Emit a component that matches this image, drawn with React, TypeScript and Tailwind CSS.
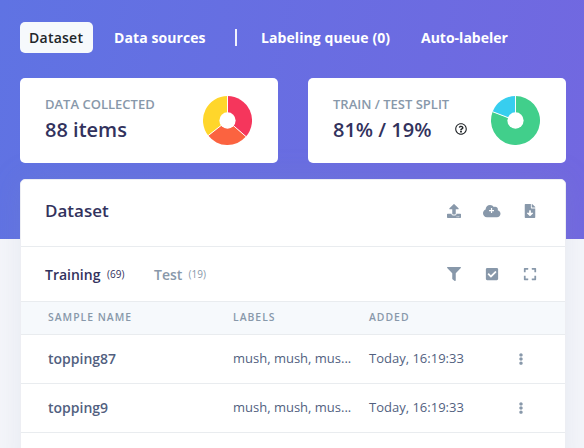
import React from "react";
import { FaUpload, FaFilter, FaCheckSquare, FaExpand, FaEllipsisV, FaRegQuestionCircle, FaFileDownload } from "react-icons/fa";

type Slice = { from: number; to: number; color: string };

const R = 25;

function point(angle: number, r: number) {
  const a = ((angle - 90) * Math.PI) / 180;
  return `${(25 + r * Math.cos(a)).toFixed(2)} ${(25 + r * Math.sin(a)).toFixed(2)}`;
}

function Donut({ slices }: { slices: Slice[] }) {
  return (
    <svg viewBox="0 0 50 50" className="mt-[1px] size-[49px] shrink-0">
      {slices.map((s) => (
        <path
          key={s.color}
          d={`M25 25L${point(s.from, R)}A${R} ${R} 0 ${s.to - s.from > 180 ? 1 : 0} 1 ${point(s.to, R)}Z`}
          fill={s.color}
        />
      ))}
      {slices.map((s) => (
        <path key={s.color} d={`M25 25L${point(s.from, 25)}`} stroke="#fff" strokeWidth="1" />
      ))}
      <circle cx="25" cy="25" r="8.3" fill="#fff" />
    </svg>
  );
}

function CloudPlus() {
  return (
    <svg viewBox="0 0 640 512" className="h-[14px] w-[17.5px]" fill="currentColor">
      <path
        fillRule="evenodd"
        d="M537.600 226.600c4.100-10.700 6.400-22.400 6.400-34.600 0-53-43-96-96-96-19.700 0-38.100 6-53.300 16.200C367 64.200 315.300 32 256 32c-88.400 0-160 71.600-160 160 0 2.700.1 5.400.2 8.100C40.200 219.800 0 273.200 0 336c0 79.500 64.500 144 144 144h368c70.700 0 128-57.300 128-128 0-61.900-44-113.600-102.400-125.400zM290 150h44v68h68v44h-68v68h-44v-68h-68v-44h68z"
      />
    </svg>
  );
}

const rows = [
  { name: "topping87", labels: "mush, mush, mus...", added: "Today, 16:19:33" },
  { name: "topping9", labels: "mush, mush, mus...", added: "Today, 16:19:33" },
];

export default function App() {
  return (
    <div className="h-[448px] w-[584px] overflow-hidden bg-[linear-gradient(to_bottom,transparent_239px,#f5f6fb_239px),linear-gradient(100deg,#5f73e3,#7367e0)] font-['Open_Sans',sans-serif] text-[#32325d]">
      <nav className="flex h-[78px] items-start pt-[22px] pl-5 text-[14px] leading-[31px] font-bold text-white whitespace-nowrap">
        <a className="w-[73px] rounded-[5px] bg-[#f6f9fc] pl-[9px] font-semibold tracking-[0.25px] text-[#212529]">Dataset</a>
        <a className="ml-[21px] w-[120px] tracking-[0.08px]">Data sources</a>
        <span className="mt-[7px] ml-[0.5px] h-[17px] w-[2px] bg-white/90" />
        <a className="ml-[24.5px] w-[160px] tracking-[0.08px]">Labeling queue (0)</a>
        <a>Auto-labeler</a>
      </nav>

      <div className="flex gap-[30px] px-5 whitespace-nowrap">
        <section className="flex h-[85px] w-[258px] shrink-0 rounded-[5px] bg-white pt-[17px] pl-[25px]">
          <div className="w-[158px]">
            <h5 className="text-[13px] leading-[19px] font-semibold text-[#8898aa]">DATA COLLECTED</h5>
            <p className="text-[20px] leading-[31px] font-semibold">88 items</p>
          </div>
          <Donut slices={[{ from: 0, to: 131, color: "#f5365c" }, { from: 131, to: 232, color: "#fb6340" }, { from: 232, to: 360, color: "#ffd62b" }]} />
        </section>
        <section className="flex h-[85px] w-[258px] shrink-0 rounded-[5px] bg-white pt-[17px] pl-[25px]">
          <div className="w-[158px]">
            <h5 className="text-[13px] leading-[19px] font-semibold text-[#8898aa]">TRAIN / TEST SPLIT</h5>
            <div className="flex items-center">
              <p className="w-[122px] text-[20px] leading-[31px] font-semibold">81% / 19%</p>
              <FaRegQuestionCircle className="mt-[-2px] size-3 text-[#212529]" />
            </div>
          </div>
          <Donut slices={[{ from: 0, to: 291, color: "#41cf8b" }, { from: 291, to: 360, color: "#37ceef" }]} />
        </section>
      </div>

      <main className="mt-4 ml-5 h-[300px] w-[546px] rounded-[5px] border border-[#edeef3] bg-white shadow-[0_0_32px_rgba(136,152,170,0.15)] whitespace-nowrap">
        <header className="flex h-[67px] items-center border-b border-[#e9ecef] pb-[4px] pl-6">
          <h2 className="w-[401.5px] pb-[1px] text-[17px] font-semibold">Dataset</h2>
          <div className="flex items-center text-[#8898aa]">
            <FaUpload className="size-[14px]" />
            <span className="ml-[22.5px]"><CloudPlus /></span>
            <FaFileDownload className="ml-[22px] size-[14px]" />
          </div>
        </header>

        <div className="flex h-[55px] items-center border-b border-[#e9ecef] pl-6 font-semibold">
          <span className="w-[62px] text-[14px]">Training</span>
          <span className="w-[47px] text-[10px] font-normal">(69)</span>
          <span className="w-[34.5px] text-[14px] text-[#8898aa]">Test</span>
          <span className="w-[258.5px] text-[10px] font-normal text-[#8898aa]">(19)</span>
          <div className="flex items-center text-[#8898aa]">
            <FaFilter className="size-[14px]" />
            <FaCheckSquare className="ml-[24px] size-[14px]" />
            <FaExpand className="ml-[24px] size-[14px]" />
          </div>
        </div>

        <div className="grid h-[33px] grid-cols-[185px_136px_150px_1fr] items-center border-b border-[#e9ecef] bg-[#f6f9fc] pb-[1px] pl-[27px] text-[10.4px] font-semibold tracking-[1px] text-[#8898aa]">
          <span>SAMPLE NAME</span>
          <span>LABELS</span>
          <span>ADDED</span>
        </div>

        {rows.map((r) => (
          <div key={r.name} className="grid h-[49px] grid-cols-[185px_136px_145.5px_1fr] items-center border-b border-[#e9ecef] pl-[27px] text-[13px] text-[#525f7f]">
            <span className="pb-[2px] text-[14px] font-semibold">{r.name}</span>
            <span>{r.labels}</span>
            <span>{r.added}</span>
            <FaEllipsisV className="size-[12px] text-[#8898aa]" />
          </div>
        ))}
      </main>
    </div>
  );
}
